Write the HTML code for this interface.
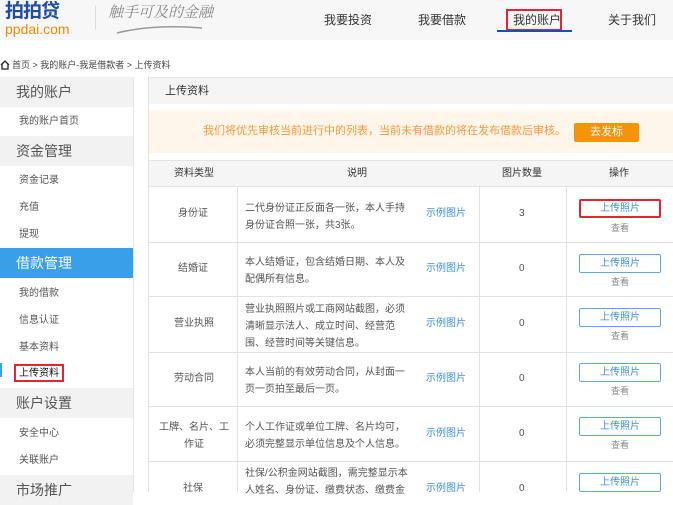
<!DOCTYPE html>
<html><head><meta charset="utf-8"><style>
*{margin:0;padding:0;box-sizing:border-box}
body{width:673px;height:492px;overflow:hidden;background:#fff;font-family:"Liberation Sans","Noto Sans CJK SC",sans-serif;color:#333;position:relative}
.a{position:absolute}
.hdr{left:0;top:0;width:673px;height:40px;background:#f7f7f7}
.nav{top:13px;font-size:12px;color:#333;line-height:14px}
.sb{left:0;top:77px;width:134px;height:415px;background:#fff;border-right:1px solid #e5e5e5}
.sh{position:absolute;left:0;width:133px;height:30px;background:#f2f2f2;font-size:14px;color:#555;padding-left:16px;line-height:30px}
.si{position:absolute;left:19px;font-size:10px;color:#555;line-height:12px}
.td{position:absolute;font-size:10px;color:#555;line-height:12px}
.ln{position:absolute;background:#e2e2e2}
.btn{position:absolute;left:579px;width:82px;height:19px;border:1px solid #5aa9ec;border-radius:2px;font-size:10px;color:#3d8fdb;text-align:center;line-height:17px}
.ck{position:absolute;left:611px;font-size:9px;color:#888;line-height:11px}
</style></head><body>
<div class="a hdr"></div>
<div class="a" style="left:5px;top:2px;font-size:19px;line-height:20px;font-weight:bold;color:#1e4fa3;letter-spacing:-1px">拍拍贷</div>
<div class="a" style="left:5px;top:22px;font-size:14px;line-height:14px;color:#f08a00">ppdai.com</div>
<div class="a" style="left:95px;top:6px;width:1px;height:24px;background:#ddd"></div>
<div class="a" style="left:108px;top:4px;font-size:15px;line-height:18px;color:#888;font-family:'Liberation Serif','Noto Serif CJK SC',serif;font-style:italic">触手可及的金融</div>
<svg class="a" style="left:112px;top:20px" width="95" height="16"><path d="M5 13 Q40 4 90 8" stroke="#999" fill="none" stroke-width="1.5"/></svg>
<div class="a nav" style="left:324px">我要投资</div>
<div class="a nav" style="left:418px">我要借款</div>
<div class="a nav" style="left:513px">我的账户</div>
<div class="a nav" style="left:608px">关于我们</div>
<div class="a" style="left:506px;top:9px;width:56px;height:22px;border:2px solid #e8232f"></div>
<div class="a" style="left:497px;top:30px;width:75px;height:2px;background:#1e4fa3"></div>

<svg class="a" style="left:0;top:60px" width="10" height="10"><path d="M1 5 L5 1 L9 5 M2 4 V9 H8 V4" stroke="#222" fill="none" stroke-width="1.3"/></svg>
<div class="a" style="left:12px;top:60px;font-size:9px;line-height:11px;color:#444">首页 &gt; 我的账户-我是借款者 &gt; 上传资料</div>

<div class="a sb">
<div class="sh" style="top:0">我的账户</div>
<div class="si" style="top:39px">我的账户首页</div>
<div class="sh" style="top:59px">资金管理</div>
<div class="si" style="top:98px">资金记录</div>
<div class="si" style="top:125px">充值</div>
<div class="si" style="top:152px">提现</div>
<div class="sh" style="top:171px;background:#389fe8;color:#fff">借款管理</div>
<div class="si" style="top:211px">我的借款</div>
<div class="si" style="top:238px">信息认证</div>
<div class="si" style="top:265px">基本资料</div>
<div class="si" style="top:291px;color:#111">上传资料</div>
<div style="position:absolute;left:0;top:286px;width:2px;height:14px;background:#389fe8"></div>
<div style="position:absolute;left:14px;top:287px;width:50px;height:18px;border:2px solid #e8232f"></div>
<div class="sh" style="top:311px">账户设置</div>
<div class="si" style="top:351px">安全中心</div>
<div class="si" style="top:378px">关联账户</div>
<div class="sh" style="top:398px">市场推广</div>
</div>

<div class="a" style="left:148px;top:76px;width:525px;height:416px;border-left:1px solid #e2e2e2"></div>
<div class="a" style="left:149px;top:77px;width:524px;height:27px;background:#f5f5f5;border-top:1px solid #e5e5e5;font-size:11px;color:#333;padding-left:16px;line-height:27px">上传资料</div>
<div class="a" style="left:149px;top:110px;width:524px;height:43px;background:#fef5eb"></div>
<div class="a" style="left:203px;top:125px;font-size:11px;line-height:13px;color:#f39a3a">我们将优先审核当前进行中的列表，当前未有借款的将在发布借款后审核。</div>
<div class="a" style="left:574px;top:123px;width:65px;height:19px;background:#f5930a;border-radius:2px;color:#fff;font-size:11px;text-align:center;line-height:19px">去发标</div>

<div class="a" style="left:149px;top:160px;width:524px;height:26px;background:#f5f5f5;border-top:1px solid #e2e2e2"></div>
<div class="td" style="left:174px;top:168px;color:#333">资料类型</div>
<div class="td" style="left:347px;top:168px;color:#333">说明</div>
<div class="td" style="left:502px;top:168px;color:#333">图片数量</div>
<div class="td" style="left:609px;top:168px;color:#333">操作</div>

<div class="ln" style="left:149px;top:186px;width:524px;height:1px"></div>
<div class="ln" style="left:149px;top:242px;width:524px;height:1px"></div>
<div class="ln" style="left:149px;top:296px;width:524px;height:1px"></div>
<div class="ln" style="left:149px;top:352px;width:524px;height:1px"></div>
<div class="ln" style="left:149px;top:406px;width:524px;height:1px"></div>
<div class="ln" style="left:149px;top:461px;width:524px;height:1px"></div>
<div class="ln" style="left:237px;top:186px;width:1px;height:306px"></div>
<div class="ln" style="left:479px;top:186px;width:1px;height:306px"></div>
<div class="ln" style="left:566px;top:186px;width:1px;height:306px"></div>

<div class="td" style="left:178px;top:208px">身份证</div>
<div class="td" style="left:245px;top:200px;line-height:17px">二代身份证正反面各一张，本人手持<br>身份证合照一张，共3张。</div>
<div class="td" style="left:426px;top:208px;color:#3d8fdb">示例图片</div>
<div class="td" style="left:519px;top:208px">3</div>
<div class="btn" style="top:199px;border:2px solid #e8232f;line-height:15px">上传照片</div>
<div class="ck" style="top:223px">查看</div>

<div class="td" style="left:178px;top:263px">结婚证</div>
<div class="td" style="left:245px;top:254px;line-height:17px">本人结婚证，包含结婚日期、本人及<br>配偶所有信息。</div>
<div class="td" style="left:426px;top:263px;color:#3d8fdb">示例图片</div>
<div class="td" style="left:519px;top:263px">0</div>
<div class="btn" style="top:254px">上传照片</div>
<div class="ck" style="top:277px">查看</div>

<div class="td" style="left:174px;top:318px">营业执照</div>
<div class="td" style="left:245px;top:301px;line-height:17px">营业执照照片或工商网站截图，必须<br>清晰显示法人、成立时间、经营范<br>围、经营时间等关键信息。</div>
<div class="td" style="left:426px;top:318px;color:#3d8fdb">示例图片</div>
<div class="td" style="left:519px;top:318px">0</div>
<div class="btn" style="top:308px">上传照片</div>
<div class="ck" style="top:331px">查看</div>

<div class="td" style="left:174px;top:373px">劳动合同</div>
<div class="td" style="left:245px;top:364px;line-height:17px">本人当前的有效劳动合同，从封面一<br>页一页拍至最后一页。</div>
<div class="td" style="left:426px;top:373px;color:#3d8fdb">示例图片</div>
<div class="td" style="left:519px;top:373px">0</div>
<div class="btn" style="top:363px">上传照片</div>
<div class="ck" style="top:386px">查看</div>

<div class="td" style="left:159px;top:419px;line-height:17px;text-align:center;width:70px">工牌、名片、工<br>作证</div>
<div class="td" style="left:245px;top:419px;line-height:17px">个人工作证或单位工牌、名片均可，<br>必须完整显示单位信息及个人信息。</div>
<div class="td" style="left:426px;top:428px;color:#3d8fdb">示例图片</div>
<div class="td" style="left:519px;top:428px">0</div>
<div class="btn" style="top:417px">上传照片</div>
<div class="ck" style="top:440px">查看</div>

<div class="td" style="left:183px;top:483px">社保</div>
<div class="td" style="left:245px;top:465px;line-height:17px">社保/公积金网站截图，需完整显示本<br>人姓名、身份证、缴费状态、缴费金</div>
<div class="td" style="left:426px;top:483px;color:#3d8fdb">示例图片</div>
<div class="td" style="left:519px;top:483px">0</div>
<div class="btn" style="top:473px">上传照片</div>
</body></html>
